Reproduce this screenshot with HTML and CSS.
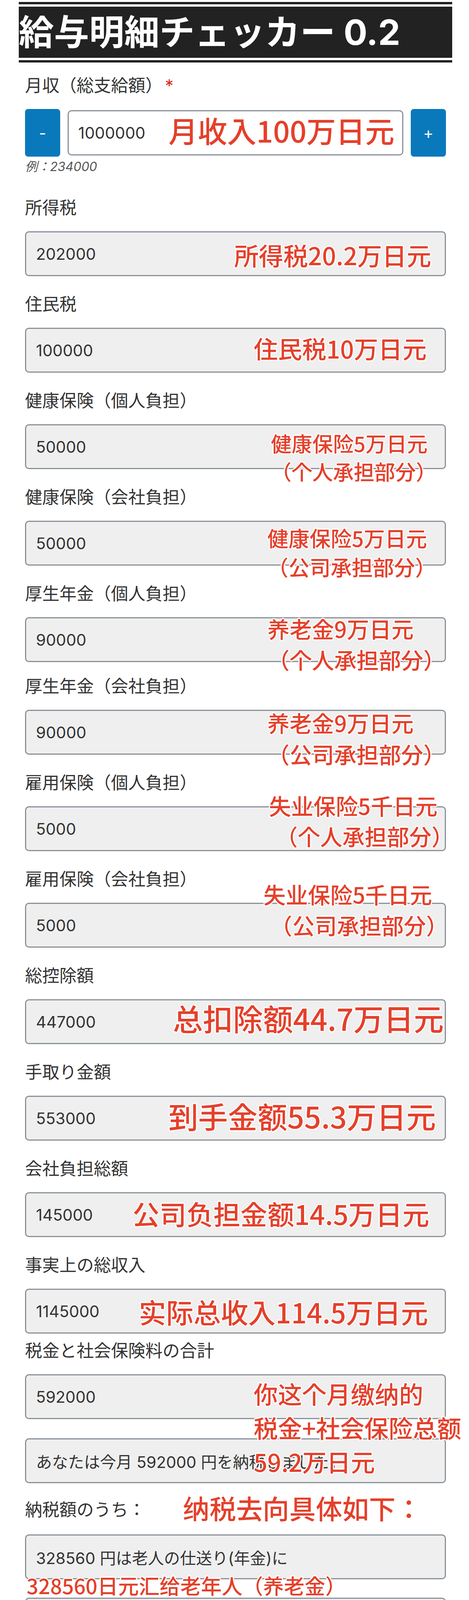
FILE: index.html
```html
<!DOCTYPE html>
<html lang="ja">
<head>
  <meta charset="UTF-8">
  <meta name="viewport" content="width=device-width, initial-scale=1.0">
  <title>給与明細チェッカー 0.2</title>
  <link rel="stylesheet" href="styles.css">
</head>
<body>
<div class="page">

  <h1 class="title">給与明細チェッカー 0.2</h1>

  <form class="form" id="payForm">
    <!-- 月収 -->
    <div class="field">
      <label class="label" for="income">月収（総支給額）<span class="req">*</span></label>
      <div class="control stepper">
        <button type="button" class="step-btn">-</button>
        <input type="text" id="income" class="num" value="1000000">
        <button type="button" class="step-btn">+</button>
        <span class="note note-income">月收入100万日元</span>
      </div>
      <small class="hint">例：234000</small>
    </div>

    <div class="field">
      <label class="label" for="shotoku">所得税</label>
      <div class="control">
        <input type="text" id="shotoku" class="num" value="202000" readonly>
        <span class="note note-shotoku">所得税20.2万日元</span>
      </div>
    </div>

    <div class="field">
      <label class="label" for="jumin">住民税</label>
      <div class="control">
        <input type="text" id="jumin" class="num" value="100000" readonly>
        <span class="note note-jumin">住民税10万日元</span>
      </div>
    </div>

    <div class="field">
      <label class="label" for="kenko1">健康保険（個人負担）</label>
      <div class="control">
        <input type="text" id="kenko1" class="num" value="50000" readonly>
        <span class="note note-kenko1">健康保险5万日元<br>（个人承担部分）</span>
      </div>
    </div>

    <div class="field">
      <label class="label" for="kenko2">健康保険（会社負担）</label>
      <div class="control">
        <input type="text" id="kenko2" class="num" value="50000" readonly>
        <span class="note note-kenko2">健康保险5万日元<br>（公司承担部分）</span>
      </div>
    </div>

    <div class="field stitch">
      <label class="label" for="kosei1">厚生年金（個人負担）</label>
      <div class="control">
        <input type="text" id="kosei1" class="num" value="90000" readonly>
        <span class="note note-kosei1">养老金9万日元<br>（个人承担部分）</span>
      </div>
    </div>

    <div class="field">
      <label class="label" for="kosei2">厚生年金（会社負担）</label>
      <div class="control">
        <input type="text" id="kosei2" class="num" value="90000" readonly>
        <span class="note note-kosei2">养老金9万日元<br>（公司承担部分）</span>
      </div>
    </div>

    <div class="field">
      <label class="label" for="koyo1">雇用保険（個人負担）</label>
      <div class="control">
        <input type="text" id="koyo1" class="num" value="5000" readonly>
        <span class="note note-koyo1">失业保险5千日元<br><span class="indent">（个人承担部分）</span></span>
      </div>
    </div>

    <div class="field">
      <label class="label" for="koyo2">雇用保険（会社負担）</label>
      <div class="control">
        <input type="text" id="koyo2" class="num" value="5000" readonly>
        <span class="note note-koyo2">失业保险5千日元<br><span class="indent">（公司承担部分）</span></span>
      </div>
    </div>

    <div class="field">
      <label class="label" for="kojo">総控除額</label>
      <div class="control">
        <input type="text" id="kojo" class="num" value="447000" readonly>
        <span class="note note-kojo">总扣除额44.7万日元</span>
      </div>
    </div>

    <div class="field">
      <label class="label" for="tedori">手取り金額</label>
      <div class="control">
        <input type="text" id="tedori" class="num" value="553000" readonly>
        <span class="note note-tedori">到手金额55.3万日元</span>
      </div>
    </div>

    <div class="field">
      <label class="label" for="kaisha">会社負担総額</label>
      <div class="control">
        <input type="text" id="kaisha" class="num" value="145000" readonly>
        <span class="note note-kaisha">公司负担金额14.5万日元</span>
      </div>
    </div>

    <div class="field stitch-lg">
      <label class="label" for="jijitsu">事実上の総収入</label>
      <div class="control">
        <input type="text" id="jijitsu" class="num" value="1145000" readonly>
        <span class="note note-jijitsu">实际总收入114.5万日元</span>
      </div>
    </div>

    <div class="field sum">
      <label class="label" for="total">税金と社会保険料の合計</label>
      <div class="control">
        <input type="text" id="total" class="num" value="592000" readonly>
        <span class="note note-total">你这个月缴纳的<br>税金+社会保险总额<br>59.2万日元</span>
      </div>
      <input type="text" class="num result" value="あなたは今月 592000 円を納税しました。" readonly>
    </div>

    <!-- 内訳 -->
    <div class="label tally-title">納税額のうち：<span class="note note-tally">纳税去向具体如下：</span></div>

    <div class="items">
      <div class="control">
        <input type="text" class="num" value="328560 円は老人の仕送り(年金)に" readonly>
        <span class="note note-item">328560日元汇给老年人（养老金）</span>
      </div>
      <div class="control">
        <input type="text" class="num" value="65712 円は老人向け医療に" readonly>
        <span class="note note-item">65712日元汇给老年看病（医疗费）</span>
      </div>
      <div class="control">
        <input type="text" class="num" value="43808 円が現役世代および次世代の医療に" readonly>
        <span class="note note-item note-item3">43808日元汇给还在工作的人和孩子看病</span>
      </div>
      <div class="control">
        <input type="text" class="num" value="50912 円が国債の返済に" readonly>
        <span class="note note-item note-item4">50912日元给日本国债付本金和利息</span>
      </div>
      <div class="control">
        <input type="text" class="num" value="32560 円が過疎自治体の支援金に使われました。" readonly>
        <span class="note note-item note-item5">32560日元支援给偏远自治体</span>
      </div>
    </div>

    <p class="other">その他少子化対策、社会福祉、防衛費、教育費、道路、住宅整備、公務員人件費に</p>
    <div class="control">
      <input type="text" class="num" value="70448 円が使われました。" readonly>
      <span class="note note-other">剩下70448日元用于少子化对策、社会福利、国防费<br>教育费、道理、公共设施房屋维修、公务员工资</span>
    </div>

    <p class="thanks">納税ありがとうございました。<span class="note note-thanks">谢谢你的纳税！</span></p>
  </form>

</div>
</body>
</html>
```

FILE: styles.css
```css
body {
  margin: 0;
  background-color: #fff;
  color: #333;
  font-family: Inter, "Noto Sans CJK JP", sans-serif;
}
.page {
  padding: 5px 43px 0 48px;
}
.title {
  margin: 0 0 27px;
  font-size: 90px;
  line-height: 119px;
  font-weight: 700;
  color: #fff;
  background-color: #222;
  background-clip: padding-box;
  border-top: 18px double #222;
  border-bottom: 18px double #222;
  white-space: nowrap;
}
.form {
  padding: 0 16px;
}
.field {
  margin-bottom: 40px;
}
.field.stitch {
  margin-bottom: 30px;
}
.field.stitch-lg {
  margin-bottom: 12px;
}
.field.sum {
  margin-bottom: 36px;
}
.label {
  display: block;
  margin-bottom: 28px;
  font-size: 44px;
  line-height: 64px;
  color: #333;
}
.req {
  margin-left: 6px;
  color: #e0281e;
}
.control {
  position: relative;
}
.stepper {
  display: flex;
  align-items: center;
  gap: 19px;
  height: 122px;
}
.step-btn {
  flex: none;
  width: 90px;
  height: 122px;
  padding: 0;
  border: none;
  border-radius: 8px;
  background-color: #0a79bb;
  color: #fff;
  font: inherit;
  font-size: 40px;
}
.num {
  display: block;
  box-sizing: border-box;
  width: 100%;
  height: 115px;
  padding: 0 25px;
  border: 3px solid #8a929a;
  border-radius: 10px;
  background-color: #efefef;
  color: #333;
  font: inherit;
  font-size: 41px;
}
.stepper .num {
  flex: 1;
  width: auto;
  height: 116px;
  padding-left: 24px;
  background-color: #fff;
}
.hint {
  display: block;
  margin-top: 4px;
  padding-bottom: 11px;
  font-size: 32px;
  line-height: 44px;
  font-style: italic;
  color: #555;
}
.result {
  margin-top: 49px;
}
.tally-title {
  position: relative;
  margin-bottom: 31px;
}
.items {
  display: flex;
  flex-direction: column;
  gap: 47px;
}
.other {
  margin: 29px 0 18px;
  font-size: 45px;
  line-height: 86px;
}
.thanks {
  position: relative;
  margin: 47px 0 0;
  font-size: 44px;
  line-height: 42px;
}

/* red notes written over the screenshot */
.note {
  position: absolute;
  white-space: nowrap;
  color: #e4402b;
  font-family: "Noto Sans CJK SC", sans-serif;
  font-weight: 500;
  font-style: normal;
  line-height: 1;
  pointer-events: none;
  text-shadow: -3px 0 #fff, 3px 0 #fff, 0 -3px #fff, 0 3px #fff,
    -2px -2px #fff, 2px 2px #fff, -2px 2px #fff, 2px -2px #fff;
}
.note .indent {
  padding-left: 17px;
}
.note-income { top: 16px; left: 367px; font-size: 75px; }
.note-shotoku { top: 28px; left: 535px; font-size: 63px; }
.note-jumin { top: 21px; left: 585px; font-size: 62px; }
.note-kenko1 { top: 12px; left: 629px; font-size: 53px; line-height: 72px; }
.note-kenko2 { top: 7px; left: 620px; font-size: 54px; line-height: 74px; }
.note-kosei1 { top: -11px; left: 620px; font-size: 57px; line-height: 79px; }
.note-kosei2 { top: -8px; left: 620px; font-size: 57px; line-height: 80px; }
.note-koyo1 { top: -42px; left: 624px; font-size: 57px; line-height: 78px; }
.note-koyo2 { top: -62px; left: 610px; font-size: 57px; line-height: 79px; }
.note-kojo { top: 9px; left: 378px; font-size: 77px; }
.note-tedori { top: 13px; left: 367px; font-size: 76px; }
.note-kaisha { top: 20px; left: 275px; font-size: 69px; }
.note-jijitsu { top: 24px; left: 291px; font-size: 70px; }
.note-total { top: 6px; left: 585px; font-size: 62px; line-height: 87px; }
.note-tally { top: -7px; left: 404px; font-size: 68px; }
.note-item { top: 104px; left: 4px; font-size: 53px; }
.note-item3 { top: 108px; font-size: 50px; }
.note-item4 { top: 100px; left: -3px; font-size: 52px; }
.note-item5 { top: 106px; }
.note-other { top: -35px; left: -1px; font-size: 48px; line-height: 64px; }
.note-thanks { top: -35px; left: 629px; font-size: 62px; line-height: 56px; }
```
